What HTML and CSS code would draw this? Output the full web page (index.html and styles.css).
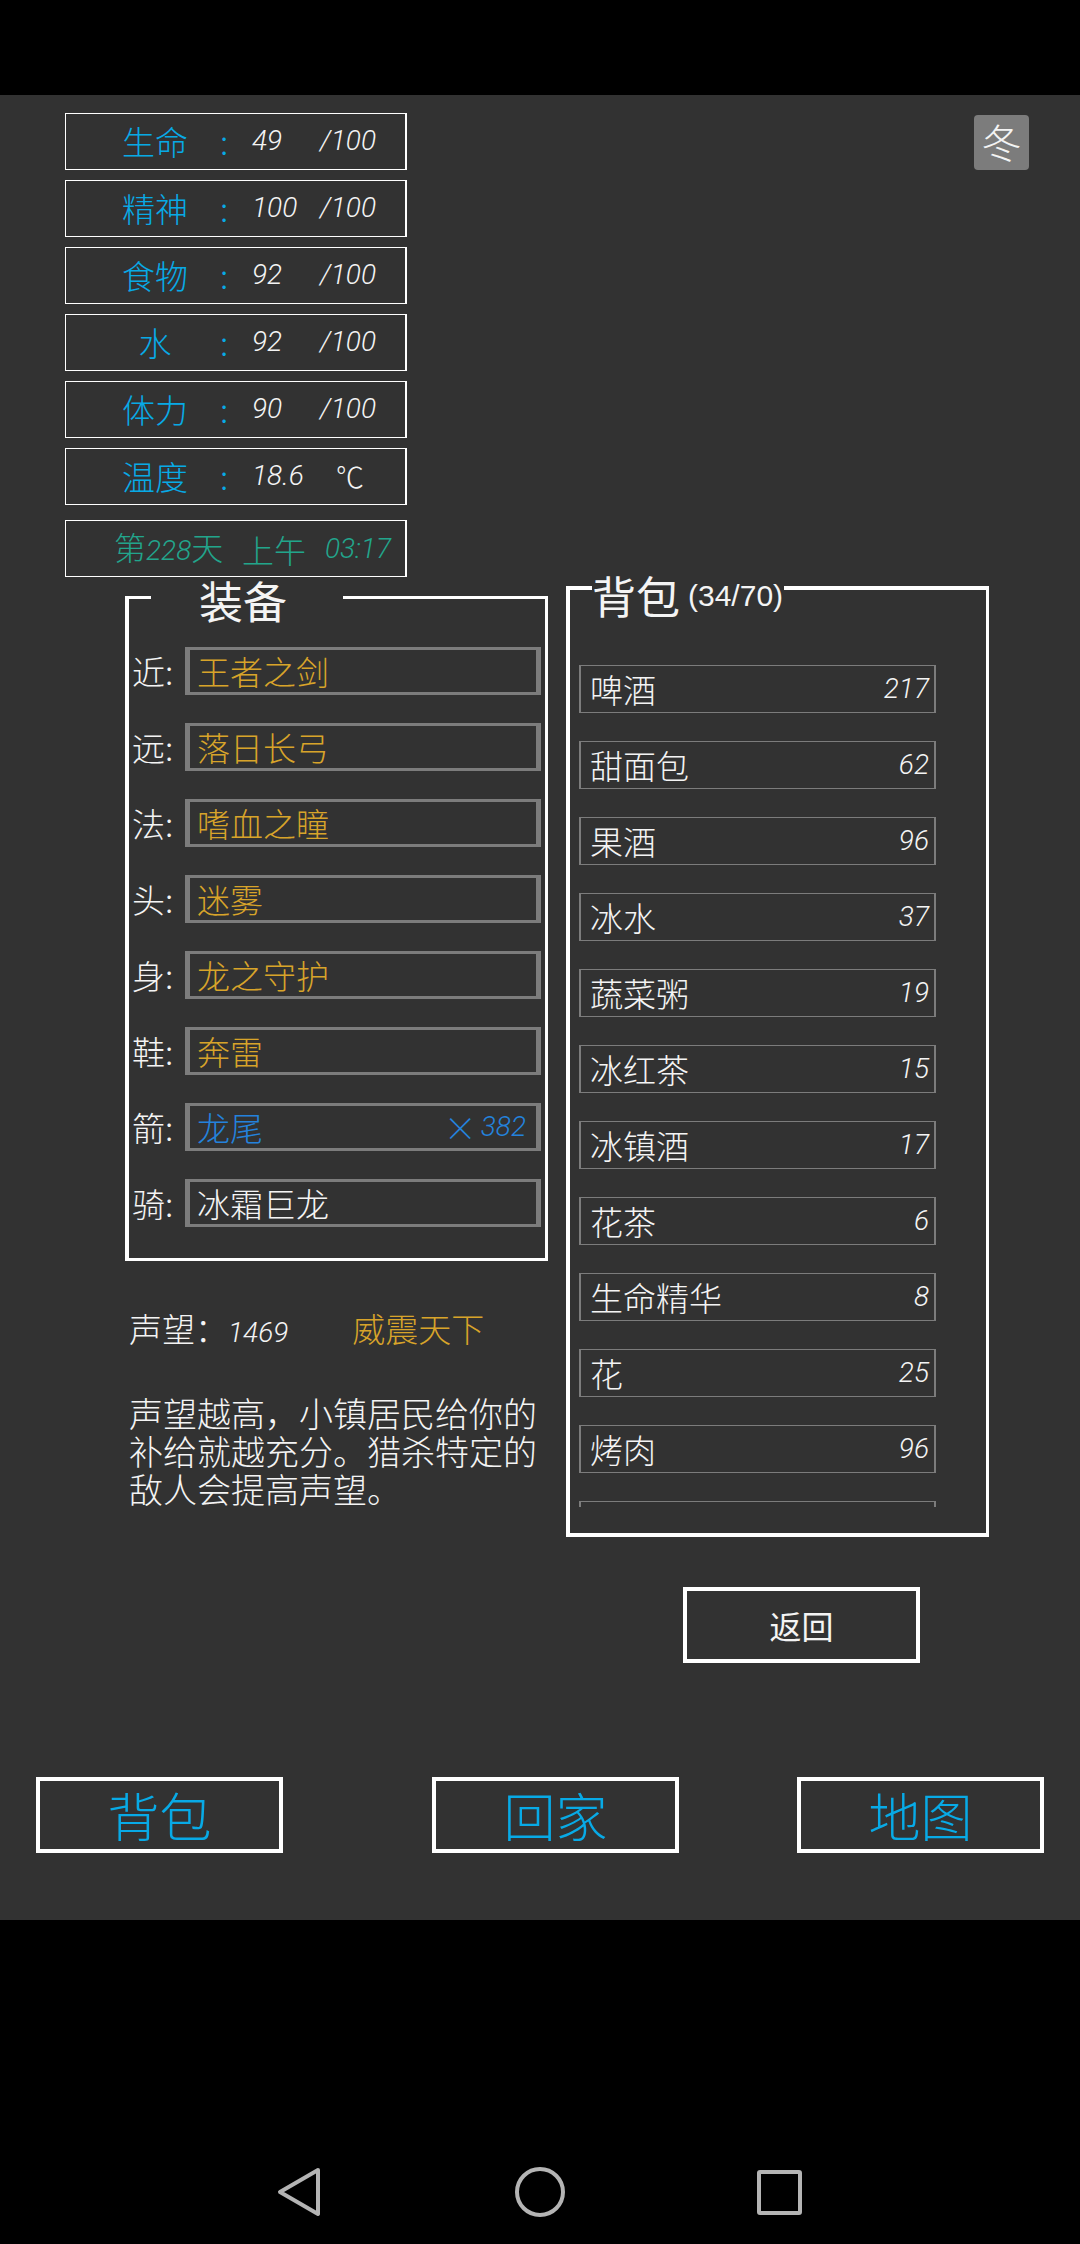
FILE: index.html
```html
<!DOCTYPE html>
<html lang="zh-CN">

<head>
    <meta charset="UTF-8">
    <meta name="viewport" content="width=device-width, initial-scale=1.0">
    <title>背包</title>
    <link rel="stylesheet" href="styles.css">
</head>

<body>
    <main class="game">
        <header class="top">
            <div class="status">
                <div class="stat"><span class="name">生命</span><span class="colon">:</span><span class="num">49</span><span class="num">/100</span></div>
                <div class="stat"><span class="name">精神</span><span class="colon">:</span><span class="num">100</span><span class="num">/100</span></div>
                <div class="stat"><span class="name">食物</span><span class="colon">:</span><span class="num">92</span><span class="num">/100</span></div>
                <div class="stat"><span class="name">水</span><span class="colon">:</span><span class="num">92</span><span class="num">/100</span></div>
                <div class="stat"><span class="name">体力</span><span class="colon">:</span><span class="num">90</span><span class="num">/100</span></div>
                <div class="stat"><span class="name">温度</span><span class="colon">:</span><span class="num">18.6</span><span class="unit">℃</span></div>
                <div class="date"><span>第<span class="num">228</span>天</span><span>上午</span><span class="num">03:17</span></div>
            </div>
            <div class="season">冬</div>
        </header>

        <div class="panels">
            <div class="left">
                <section class="panel equip">
                    <h2>装备</h2>
                    <ul>
                        <li><span class="slot">近:</span><span class="box gold">王者之剑</span></li>
                        <li><span class="slot">远:</span><span class="box gold">落日长弓</span></li>
                        <li><span class="slot">法:</span><span class="box gold">嗜血之瞳</span></li>
                        <li><span class="slot">头:</span><span class="box gold">迷雾</span></li>
                        <li><span class="slot">身:</span><span class="box gold">龙之守护</span></li>
                        <li><span class="slot">鞋:</span><span class="box gold">奔雷</span></li>
                        <li><span class="slot">箭:</span><span class="box blue">龙尾<span class="count">×<span class="num">382</span></span></span></li>
                        <li><span class="slot">骑:</span><span class="box">冰霜巨龙</span></li>
                    </ul>
                </section>
                <p class="fame"><span>声望：<span class="num">1469</span></span><span class="gold">威震天下</span></p>
                <p class="help">声望越高，小镇居民给你的补给就越充分。猎杀特定的敌人会提高声望。</p>
            </div>

            <div class="right">
                <section class="panel bag">
                    <h2>背包<small>(34/70)</small></h2>
                    <ul>
                        <li>啤酒<span class="num">217</span></li>
                        <li>甜面包<span class="num">62</span></li>
                        <li>果酒<span class="num">96</span></li>
                        <li>冰水<span class="num">37</span></li>
                        <li>蔬菜粥<span class="num">19</span></li>
                        <li>冰红茶<span class="num">15</span></li>
                        <li>冰镇酒<span class="num">17</span></li>
                        <li>花茶<span class="num">6</span></li>
                        <li>生命精华<span class="num">8</span></li>
                        <li>花<span class="num">25</span></li>
                        <li>烤肉<span class="num">96</span></li>
                        <li></li>
                    </ul>
                </section>
                <button type="button" class="back">返回</button>
            </div>
        </div>

        <nav class="menu">
            <button type="button">背包</button>
            <button type="button">回家</button>
            <button type="button">地图</button>
        </nav>
    </main>

    <footer class="sysbar">
        <button type="button" aria-label="后退">
            <svg width="50" height="50" viewBox="0 0 50 50"><path d="M43 3 L5 25 L43 47 Z"/></svg>
        </button>
        <button type="button" aria-label="主页">
            <svg width="50" height="50" viewBox="0 0 50 50"><circle cx="25" cy="25" r="23"/></svg>
        </button>
        <button type="button" aria-label="最近">
            <svg width="50" height="50" viewBox="0 0 50 50"><rect x="4" y="5" width="41" height="41" rx="1"/></svg>
        </button>
    </footer>
</body>

</html>
```
FILE: styles.css
```css
* {
    box-sizing: border-box;
}

body {
    margin: 0;
    padding-top: 95px;
    min-height: 100vh;
    display: flex;
    flex-direction: column;
    background: #000;
    color: #f4f4f4;
    font-family: "Noto Sans CJK SC", sans-serif;
    font-weight: 300;
    font-size: 33px;
    line-height: 38px;
}

ul, p, h2 {
    margin: 0;
    padding: 0;
    list-style: none;
}

button {
    font: inherit;
    color: inherit;
    background: none;
    padding: 0;
    border: 4px solid #fff;
}

.game {
    background: #323232;
    padding-bottom: 67px;
}

/* 数字 */
.num {
    font-family: Roboto, sans-serif;
    font-size: 28px;
    font-style: italic;
    font-weight: 300;
}

.gold {
    color: #d8a42a;
}

.blue {
    color: #2482dc;
}

/* 状态栏 */
.top {
    display: flex;
    justify-content: space-between;
    align-items: flex-start;
    padding: 18px 51px 0 65px;
}

.status {
    width: 342px;
    display: grid;
    gap: 10px;
}

.stat, .date {
    height: 57px;
    border: 1px solid #fff;
    border-right-width: 2px;
    display: flex;
    align-items: center;
}

.stat {
    display: grid;
    grid-template-columns: 70px 62px 68px 1fr;
    padding: 0 0 2px 54px;
}

.name, .colon {
    color: #08aae6;
    text-align: center;
}

.colon {
    padding-left: 6px;
}

.unit {
    padding-left: 16px;
    font-size: 28px;
}

.date {
    margin-top: 5px;
    padding: 0 14px 0 48px;
    justify-content: space-between;
    font-size: 32px;
    color: #22a58c;
}

.season {
    width: 55px;
    height: 55px;
    margin-top: 2px;
    border-radius: 4px;
    background: #7c7c7c;
    font-size: 40px;
    line-height: 53px;
    text-align: center;
}

/* 装备和背包 */
.panels {
    display: grid;
    grid-template-columns: 1fr 1fr;
    gap: 18px;
    padding: 0 91px 0 125px;
    margin-top: 9px;
}

.panel {
    border: 3px solid #fff;
    border-left-width: 4px;
}

.panel h2 {
    width: 192px;
    margin-left: 22px;
    background: #323232;
    font-size: 44px;
    font-weight: 400;
    line-height: 44px;
}

.equip {
    margin-top: 10px;
    padding-bottom: 31px;
}

.equip h2 {
    margin-top: -21px;
    padding-left: 48px;
}

.equip ul {
    margin-top: 25px;
    display: grid;
    gap: 28px;
}

.equip li {
    display: flex;
    align-items: center;
    padding: 0 4px 0 3px;
}

.slot {
    width: 53px;
}

.box {
    flex: 1;
    height: 48px;
    padding: 0 10px 0 7px;
    border: 3px solid #7c7c7c;
    border-width: 3px 5px;
    display: flex;
    justify-content: space-between;
    align-items: center;
}

.count {
    display: flex;
    align-items: center;
    gap: 4px;
}

.fame {
    display: flex;
    gap: 64px;
    margin-top: 48px;
    padding-left: 4px;
}

.help {
    margin-top: 42px;
    padding: 0 10px 0 4px;
    font-size: 34px;
}

.bag {
    border-top-width: 4px;
    border-bottom-width: 4px;
    padding-bottom: 26px;
}

.bag h2 {
    display: flex;
    gap: 8px;
    align-items: center;
    margin-top: -17px;
    white-space: nowrap;
}

.bag small {
    padding-top: 2px;
    font-family: "Liberation Sans", sans-serif;
    font-size: 30px;
    line-height: 38px;
}

.bag ul {
    margin: 48px 50px 0 9px;
    max-height: 842px;
    overflow: hidden;
}

.bag li {
    display: flex;
    justify-content: space-between;
    align-items: center;
    height: 48px;
    margin-bottom: 28px;
    padding: 0 5px 0 9px;
    border: 1px solid #7c7c7c;
    border-width: 1px 2px;
}

.back {
    display: block;
    width: 237px;
    height: 76px;
    margin: 50px 0 0 117px;
    font-size: 32px;
    font-weight: 400;
}

/* 底部按钮 */
.menu {
    display: grid;
    grid-template-columns: 396fr 365fr 247fr;
    margin-top: 114px;
    padding: 0 36px;
}

.menu button {
    width: 247px;
    height: 76px;
    font-size: 52px;
    line-height: 60px;
    color: #08aae6;
}

.sysbar {
    flex: 1;
    display: flex;
    justify-content: center;
    align-items: flex-end;
    gap: 190px;
    padding-bottom: 27px;
}

.sysbar button {
    width: 50px;
    height: 50px;
    border: 0;
}

.sysbar svg {
    display: block;
    fill: none;
    stroke: #b4b4b4;
    stroke-width: 4;
    stroke-linejoin: round;
}
```
